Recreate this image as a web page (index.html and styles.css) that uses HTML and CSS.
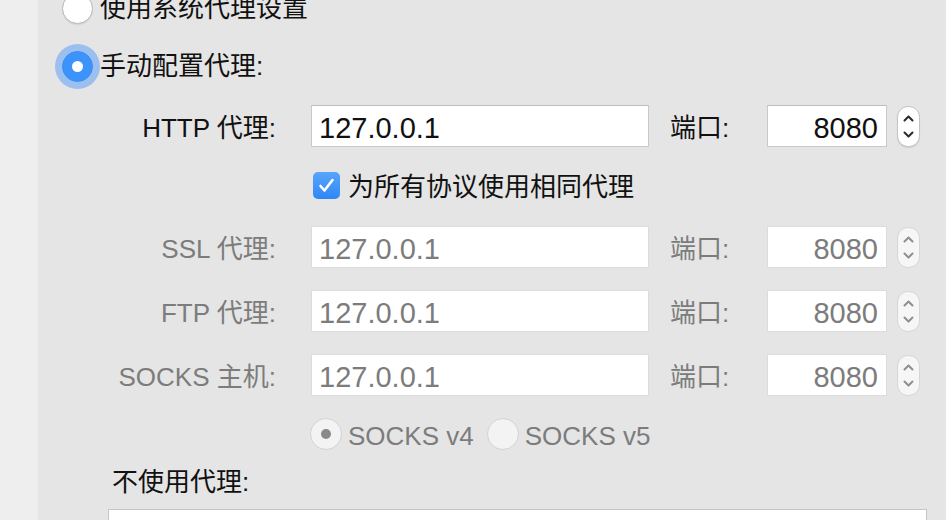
FILE: index.html
```html
<!DOCTYPE html>
<html lang="zh-CN">
<head>
<meta charset="utf-8">
<title>代理设置</title>
<link rel="stylesheet" href="styles.css">
</head>
<body>
<div class="window">
  <aside class="sidebar"></aside>
  <main class="pane">
    <div class="radio-row first">
      <span class="radio"></span>
      <span class="radio-text">使用系统代理设置</span>
    </div>
    <div class="radio-row manual">
      <span class="radio checked focused"></span>
      <span class="radio-text">手动配置代理:</span>
    </div>

    <div class="proxy-rows">
      <div class="row">
        <span class="lbl">HTTP 代理:</span>
        <div class="field">127.0.0.1</div>
        <span class="port-lbl">端口:</span>
        <div class="field port">8080</div>
        <div class="stepper">
          <svg viewBox="0 0 23 41" width="23" height="41"><path d="M7.5 14.5 L11.5 10.5 L15.5 14.5 M7.5 26.5 L11.5 30.5 L15.5 26.5" fill="none" stroke="#2a2a2a" stroke-width="2" stroke-linecap="round" stroke-linejoin="round"/></svg>
        </div>
      </div>

      <div class="check-row">
        <span class="checkbox"><svg viewBox="0 0 27 27" width="27" height="27"><path d="M7.5 14 L11.5 18.5 L19.5 8" fill="none" stroke="#fff" stroke-width="2.6" stroke-linecap="round" stroke-linejoin="round"/></svg></span>
        <span class="check-text">为所有协议使用相同代理</span>
      </div>

      <div class="row disabled">
        <span class="lbl">SSL 代理:</span>
        <div class="field">127.0.0.1</div>
        <span class="port-lbl">端口:</span>
        <div class="field port">8080</div>
        <div class="stepper">
          <svg viewBox="0 0 23 41" width="23" height="41"><path d="M7.5 14.5 L11.5 10.5 L15.5 14.5 M7.5 26.5 L11.5 30.5 L15.5 26.5" fill="none" stroke="#8f8f8f" stroke-width="2" stroke-linecap="round" stroke-linejoin="round"/></svg>
        </div>
      </div>

      <div class="row disabled">
        <span class="lbl">FTP 代理:</span>
        <div class="field">127.0.0.1</div>
        <span class="port-lbl">端口:</span>
        <div class="field port">8080</div>
        <div class="stepper">
          <svg viewBox="0 0 23 41" width="23" height="41"><path d="M7.5 14.5 L11.5 10.5 L15.5 14.5 M7.5 26.5 L11.5 30.5 L15.5 26.5" fill="none" stroke="#8f8f8f" stroke-width="2" stroke-linecap="round" stroke-linejoin="round"/></svg>
        </div>
      </div>

      <div class="row disabled">
        <span class="lbl">SOCKS 主机:</span>
        <div class="field">127.0.0.1</div>
        <span class="port-lbl">端口:</span>
        <div class="field port">8080</div>
        <div class="stepper">
          <svg viewBox="0 0 23 41" width="23" height="41"><path d="M7.5 14.5 L11.5 10.5 L15.5 14.5 M7.5 26.5 L11.5 30.5 L15.5 26.5" fill="none" stroke="#8f8f8f" stroke-width="2" stroke-linecap="round" stroke-linejoin="round"/></svg>
        </div>
      </div>

      <div class="version-row">
        <span class="radio small-disabled dot"></span>
        <span class="version-text">SOCKS v4</span>
        <span class="radio small-disabled"></span>
        <span class="version-text">SOCKS v5</span>
      </div>
    </div>

    <div class="bypass-label">不使用代理:</div>
    <div class="bypass-box"></div>
  </main>
</div>
</body>
</html>
```

FILE: styles.css
```css
* { box-sizing: border-box; }

html, body {
  margin: 0;
  padding: 0;
  width: 946px;
  height: 520px;
  overflow: hidden;
}

body {
  font-family: "Liberation Sans", "Noto Sans CJK SC", sans-serif;
  font-size: 26px;
  line-height: 32px;
  color: #111;
  background: #e5e5e5;
}

.window {
  display: flex;
  width: 946px;
  height: 520px;
  overflow: hidden;
}

.sidebar {
  width: 38px;
  flex: none;
  background: #eeeeee;
}

.pane {
  flex: 1;
  background: #e5e5e5;
  padding-left: 24px;
  display: flex;
  flex-direction: column;
  overflow: hidden;
}

/* radio rows */
.radio-row {
  display: flex;
  align-items: center;
  height: 32px;
  flex: none;
}

.radio-row.first { margin-top: -8px; }
.radio-row.manual { margin-top: 26px; }

.radio {
  width: 31px;
  height: 31px;
  border-radius: 50%;
  background: #fff;
  border: 1px solid #b9b9b9;
  box-shadow: 0 1px 1px rgba(0,0,0,0.08);
  flex: none;
  display: flex;
  align-items: center;
  justify-content: center;
}

.radio.checked {
  background: #3b93fb;
  border-color: #3b8ef3;
}

.radio.checked::after {
  content: "";
  width: 11px;
  height: 11px;
  border-radius: 50%;
  background: #fff;
}

.radio.focused {
  box-shadow: 0 0 0 7px rgba(94, 160, 246, 0.55);
}

.radio-text {
  margin-left: 7px;
}

/* proxy rows */
.proxy-rows {
  margin-left: 38px;
  margin-top: 23px;
  display: flex;
  flex-direction: column;
  flex: none;
}

.row {
  display: flex;
  align-items: center;
  height: 42px;
}

.row + .row { margin-top: 22px; }

.lbl {
  width: 176px;
  text-align: right;
  margin-right: 35px;
  white-space: nowrap;
  padding-top: 4px;
}

.field {
  width: 338px;
  height: 42px;
  background: #fff;
  border: 1px solid #c9c9c9;
  border-top-color: #bdbdbd;
  font-size: 29px;
  line-height: 38px;
  padding-top: 3px;
  padding-left: 7px;
  color: #111;
  white-space: nowrap;
}

.port-lbl {
  margin-left: 21px;
  width: 64px;
  margin-right: 33px;
  white-space: nowrap;
  padding-top: 4px;
}

.field.port {
  width: 120px;
  text-align: right;
  padding-left: 0;
  padding-right: 8px;
}

.stepper {
  margin-left: 10px;
  width: 23px;
  height: 41px;
  border-radius: 11px;
  background: #fff;
  border: 1px solid #c4c4c4;
  box-shadow: 0 1px 1px rgba(0,0,0,0.1);
  display: flex;
  align-items: center;
  justify-content: center;
  overflow: hidden;
}

.stepper svg { flex: none; display: block; }

.row.disabled { color: #7c7c7c; }
.row.disabled .field {
  color: #7c7c7c;
  border-color: #dcdcdc;
}
.row.disabled .stepper {
  background: #f6f6f6;
  border-color: #d6d6d6;
  box-shadow: none;
}

/* checkbox */
.check-row {
  display: flex;
  align-items: center;
  height: 32px;
  margin-top: 22px;
  margin-bottom: 25px;
  margin-left: 213px;
}

.checkbox {
  width: 27px;
  height: 27px;
  border-radius: 5px;
  background: linear-gradient(#58a5fb, #2f87f6);
  flex: none;
  display: flex;
}

.check-text { margin-left: 8px; padding-top: 4px; }

/* socks version */
.version-row {
  display: flex;
  align-items: center;
  height: 32px;
  margin-top: 22px;
  margin-left: 210px;
  color: #7c7c7c;
}

.radio.small-disabled {
  width: 32px;
  height: 32px;
  background: #f3f3f3;
  border-color: #d3d3d3;
  box-shadow: none;
}

.radio.small-disabled.dot::after {
  content: "";
  width: 10px;
  height: 10px;
  border-radius: 50%;
  background: #8a8a8a;
}

.version-text { margin-left: 6px; margin-right: 13px; padding-top: 4px; }

/* bypass */
.bypass-label {
  margin-left: 50px;
  margin-top: 16px;
  height: 32px;
  flex: none;
}

.bypass-box {
  margin-left: 46px;
  margin-top: 11px;
  width: 819px;
  height: 80px;
  background: #fff;
  border: 1px solid #c6c6c6;
  flex: none;
}
```
